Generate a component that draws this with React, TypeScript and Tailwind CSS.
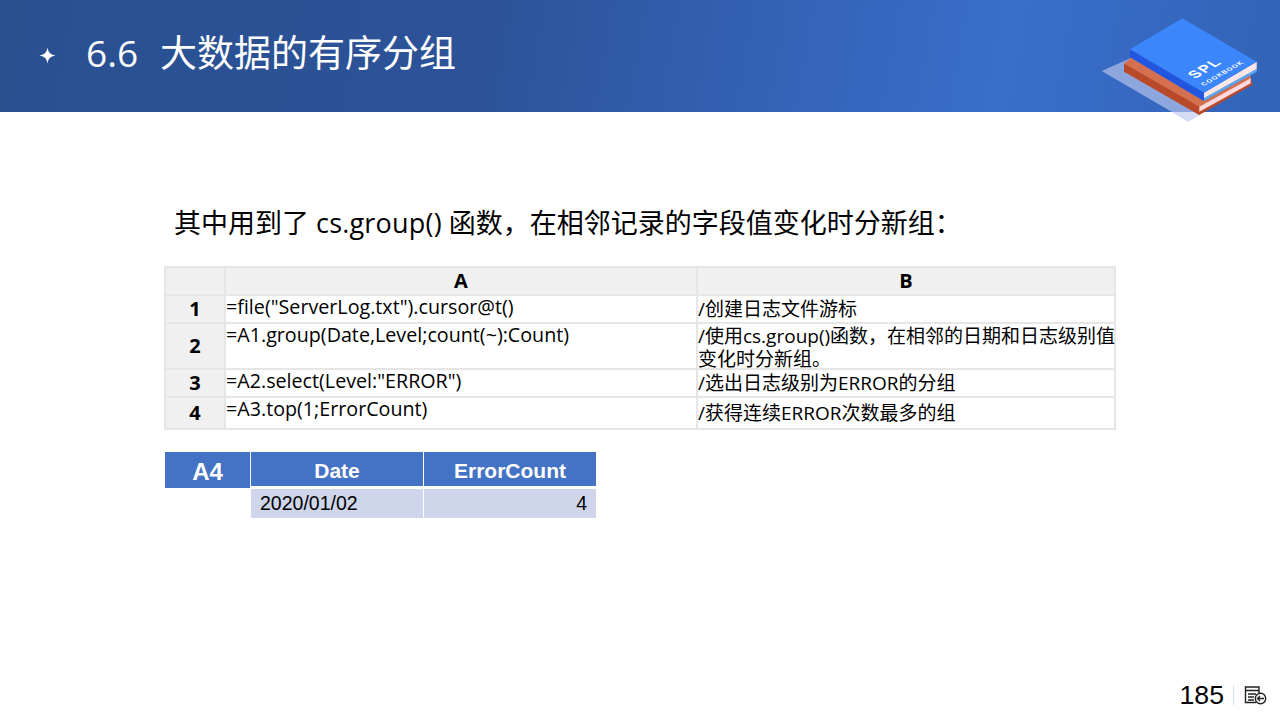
const cjk = 'font-["Open_Sans","Noto_Sans_CJK_SC",sans-serif]';
const arial = 'font-["Liberation_Sans",Arial,sans-serif]';

const rows = [
  { n: '1', h: 'h-[28px]', a: '=file("ServerLog.txt").cursor@t()', b: ['/创建日志文件游标'], bClass: 'pt-[2px]' },
  { n: '2', h: 'h-[46px]', a: '=A1.group(Date,Level;count(~):Count)', b: ['/使用cs.group()函数，在相邻的日期和日志级别值', '变化时分新组。'], bClass: 'pt-[1px]' },
  { n: '3', h: 'h-[28px]', a: '=A2.select(Level:"ERROR")', b: ['/选出日志级别为ERROR的分组'], bClass: 'pt-[2px]' },
  { n: '4', h: 'h-[32px]', a: '=A3.top(1;ErrorCount)', b: ['/获得连续ERROR次数最多的组'], bClass: 'pt-[4px]' },
];

function BookLogo() {
  return (
    <svg className="absolute left-[1080px] top-0" width="200" height="130" viewBox="0 0 200 130">
      <polygon points="21.7,71 53,57 120,112 92,112" fill="#8ea6de" />
      <polygon points="92,112 120,112 120,115 108,122" fill="#d4dcf5" />
      <polygon points="44,63.3 44,71.7 119.3,115 172.7,84.5 170.7,78 119.3,106" fill="#b84a2a" />
      <polygon points="44,63.3 50,59 50,57 124,101 170.7,75 170.7,78.5 119.3,106.7" fill="#d4704f" />
      <polygon points="119.3,106.7 170.7,78.3 170.7,83.3 119.3,111.7" fill="#ffd9de" />
      <polygon points="50,49.3 124,92.7 124,101 50,57.3" fill="#2356e0" />
      <polygon points="124,92.7 176.7,61.7 176.7,69 124,98.3" fill="#ffe6e6" />
      <polygon points="124,98.3 176.7,69 176.7,71.7 124,101" fill="#5fa8f0" />
      <polygon points="50,49.3 102.3,18.3 176.7,61.7 124,92.7" fill="#3b86fb" />
      <text transform="matrix(.866 -.5 .866 .5 115 79)" fill="#fff" fontFamily="Liberation Sans" fontWeight="700" fontSize="14.5" letterSpacing="1.5">SPL</text>
      <text transform="matrix(.866 -.5 .866 .5 124 86)" fill="#fff" fontFamily="Liberation Sans" fontWeight="700" fontSize="6.5" letterSpacing="1">COOKBOOK</text>
    </svg>
  );
}

export default function App() {
  return (
    <div className={`relative flex flex-col w-[1280px] h-[720px] overflow-hidden bg-white text-black ${cjk}`}>
      <header className="flex items-center h-[112px] shrink-0 pl-[39px] pb-[7px] bg-[linear-gradient(100deg,#29508f_0%,#2c5399_38%,#3a6ecb_78%,#3263b6_100%)] text-white">
        <svg width="18" height="18" viewBox="0 0 18 18" className="shrink-0 mt-[7px]">
          <path d="M8.5 0.5 C9.5 5.5 11 7.2 16.5 8.5 C11 9.8 9.5 11.5 8.5 16.5 C7.5 11.5 6 9.8 0.5 8.5 C6 7.2 7.5 5.5 8.5 0.5 Z" fill="#fff" />
        </svg>
        <h1 className="flex ml-[29px] text-[37px] font-normal leading-none whitespace-nowrap">
          <span>6.6</span>
          <span className="ml-[22px]">大数据的有序分组</span>
        </h1>
      </header>
      <BookLogo />

      <main className="flex flex-col flex-1 pl-[165px]">
        <p className="mt-[92px] ml-[9px] text-[27px] leading-[38px] whitespace-pre">
          其中用到了 <span className="tracking-[0.2px]">cs.group()</span> 函数，在相邻记录的字段值变化时分新组：
        </p>

        <table className="mt-[24px] -ml-px w-[950px] table-fixed border-collapse">
          <colgroup>
            <col className="w-[60px]" />
            <col className="w-[472px]" />
            <col className="w-[418px]" />
          </colgroup>
          <thead>
            <tr className="h-[28px] bg-[#f0f0f0] font-bold text-center text-[20px] leading-[22px]">
              <th className="border-2 border-[#e6e6e6]"></th>
              <th className="border-2 border-[#e6e6e6]">A</th>
              <th className="border-2 border-[#e6e6e6]">B</th>
            </tr>
          </thead>
          <tbody>
            {rows.map((row) => (
              <tr key={row.n} className={row.h}>
                <td className="border-2 border-[#e6e6e6] bg-[#f0f0f0] text-center font-bold text-[20px] leading-[22px]">{row.n}</td>
                <td className="border-2 border-[#e6e6e6] align-top whitespace-nowrap text-[19.7px] leading-[22px]">{row.a}</td>
                <td className={`border-2 border-[#e6e6e6] align-top text-[19px] leading-[23px] whitespace-nowrap ${row.bClass}`}>
                  <div className="max-h-[43px]">
                    {row.b.map((line) => (
                      <div key={line}>{line}</div>
                    ))}
                  </div>
                </td>
              </tr>
            ))}
          </tbody>
        </table>

        <div className={`flex mt-[22px] ${arial}`}>
          <div className="flex items-center justify-center w-[85px] h-[36px] pt-[3px] bg-[#4472c4] text-white text-[24px] font-bold">A4</div>
          <div className="ml-px w-[345px] grid grid-cols-[172px_172px] gap-x-px gap-y-[3px]">
            <div className="flex items-center justify-center h-[34px] pt-[3px] bg-[#4472c4] text-white text-[21px] font-bold">Date</div>
            <div className="flex items-center justify-center h-[34px] pt-[3px] bg-[#4472c4] text-white text-[21px] font-bold">ErrorCount</div>
            <div className="flex items-center h-[29px] pl-[9px] bg-[#cfd5ea] text-[19.5px]">2020/01/02</div>
            <div className="flex items-center justify-end h-[29px] pr-[9px] bg-[#cfd5ea] text-[19.5px]">4</div>
          </div>
        </div>

        <footer className="flex items-center justify-end mt-auto h-[30px] mb-[10px] pr-[13px]">
          <span className={`text-[26.67px] leading-none ${arial}`}>185</span>
          <span className="ml-[9px] w-px h-[20px] bg-[#d5e0f2]"></span>
          <svg className="ml-[10px]" width="23" height="19" viewBox="0 0 23 19" fill="none" stroke="#222" strokeWidth="1.4">
            <path d="M12 16.5 H1.5 V1 H15 V7" />
            <path d="M1.5 4.5 H15 M4 8 H12 M4 11 H10 M4 14 H10" />
            <circle cx="16.5" cy="12.5" r="5.2" fill="#fff" />
            <path d="M20 12.5 H13.5 M16 10 L13.5 12.5 L16 15" />
          </svg>
        </footer>
      </main>
    </div>
  );
}
